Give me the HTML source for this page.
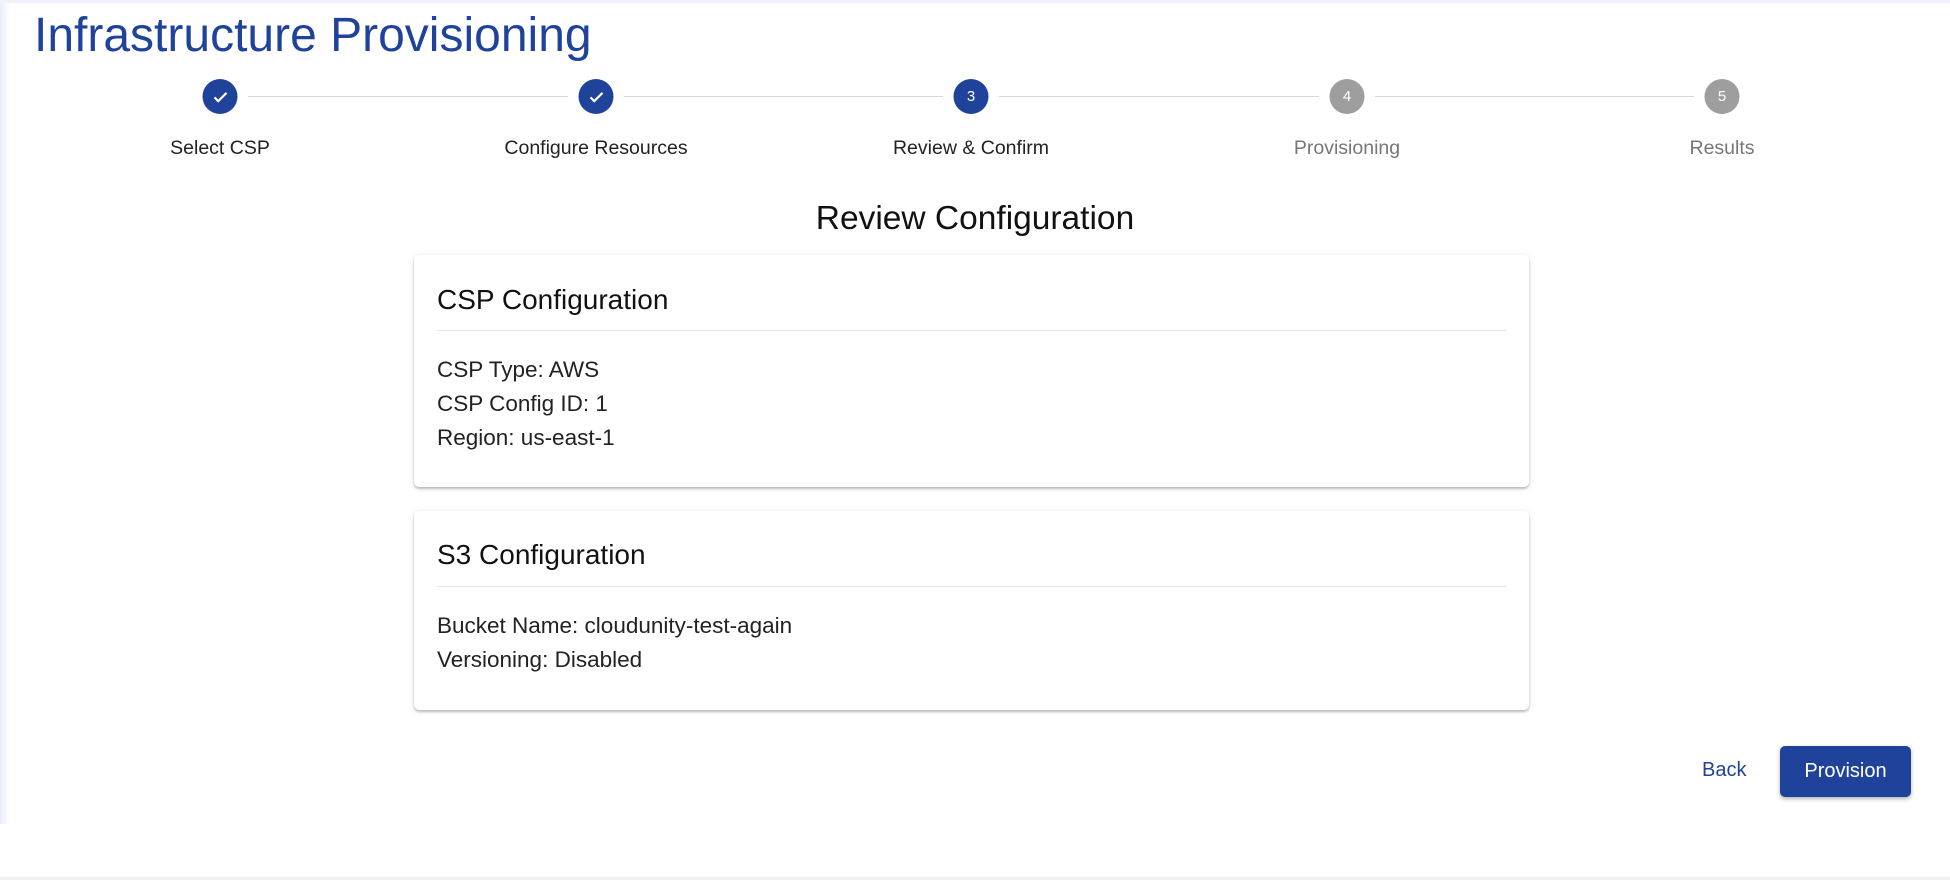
<!DOCTYPE html>
<html><head><meta charset="utf-8"><style>
*{margin:0;padding:0;box-sizing:border-box}
body{width:1950px;height:880px;background:#fff;font-family:"Liberation Sans",Arial,sans-serif;position:relative;overflow:hidden;color:#222}
.abs{position:absolute}
.lb{left:0;top:0;width:10px;height:824px;background:linear-gradient(to right,#e8eef9,#fff)}
.tb{left:0;top:0;width:1950px;height:3px;background:#eef1f8}
.bb{left:0;top:877px;width:1950px;height:3px;background:#eef1f6}
h1{position:absolute;left:34px;top:8px;font-size:48px;font-weight:400;color:#1f429b;white-space:nowrap}
.c{position:absolute;width:35px;height:35px;border-radius:50%;top:79px;color:#fff;font-size:15px;display:flex;align-items:center;justify-content:center;transform:translateX(-50%)}
.bl{background:#1f429b}.gr{background:#9e9e9e}
.line{position:absolute;top:96px;height:1px;background:#d8d8d8}
.lab{position:absolute;top:137px;font-size:19.5px;transform:translateX(-50%);white-space:nowrap;color:#222}
.lab.g{color:#777}
.h2{position:absolute;left:0;width:1950px;text-align:center;top:200px;font-size:33.5px;color:#111}
.card{position:absolute;left:414px;width:1115px;background:#fff;border-radius:5px;box-shadow:0 2px 2px rgba(0,0,0,.2),0 1px 6px rgba(0,0,0,.12)}
.ct{position:absolute;left:23px;font-size:28px;color:#111}
.dv{position:absolute;left:23px;right:23px;height:1px;background:#e4e4e4}
.tx{position:absolute;left:23px;font-size:22.5px;line-height:34px;color:#222}
.back{position:absolute;left:1702px;top:759px;font-size:20px;color:#1f429b}
.btn{position:absolute;left:1780px;top:746px;width:131px;height:51px;background:#1f429b;border-radius:5px;color:#fff;font-size:20px;display:flex;align-items:center;justify-content:center;box-shadow:0 2px 4px rgba(0,0,0,.3)}
</style></head><body>
<div class="abs lb"></div><div class="abs tb"></div><div class="abs bb"></div>
<h1>Infrastructure Provisioning</h1>
<div class="line" style="left:248px;width:320px"></div>
<div class="line" style="left:624px;width:319px"></div>
<div class="line" style="left:999px;width:320px"></div>
<div class="line" style="left:1375px;width:319px"></div>
<div class="c bl" style="left:220px"><svg width="18" height="18" viewBox="0 0 24 24"><path d="M4 12.5l5 5L20 6.5" fill="none" stroke="#fff" stroke-width="3"/></svg></div>
<div class="c bl" style="left:596px"><svg width="18" height="18" viewBox="0 0 24 24"><path d="M4 12.5l5 5L20 6.5" fill="none" stroke="#fff" stroke-width="3"/></svg></div>
<div class="c bl" style="left:971px">3</div>
<div class="c gr" style="left:1347px">4</div>
<div class="c gr" style="left:1722px">5</div>
<div class="lab" style="left:220px">Select CSP</div>
<div class="lab" style="left:596px">Configure Resources</div>
<div class="lab" style="left:971px">Review &amp; Confirm</div>
<div class="lab g" style="left:1347px">Provisioning</div>
<div class="lab g" style="left:1722px">Results</div>
<div class="h2">Review Configuration</div>
<div class="card" style="top:255px;height:232px">
<div class="ct" style="top:29px">CSP Configuration</div>
<div class="dv" style="top:75px"></div>
<div class="tx" style="top:98px">CSP Type: AWS<br>CSP Config ID: 1<br>Region: us-east-1</div>
</div>
<div class="card" style="top:511px;height:199px">
<div class="ct" style="top:28px">S3 Configuration</div>
<div class="dv" style="top:75px"></div>
<div class="tx" style="top:98px">Bucket Name: cloudunity-test-again<br>Versioning: Disabled</div>
</div>
<div class="back">Back</div>
<div class="btn">Provision</div>
</body></html>
